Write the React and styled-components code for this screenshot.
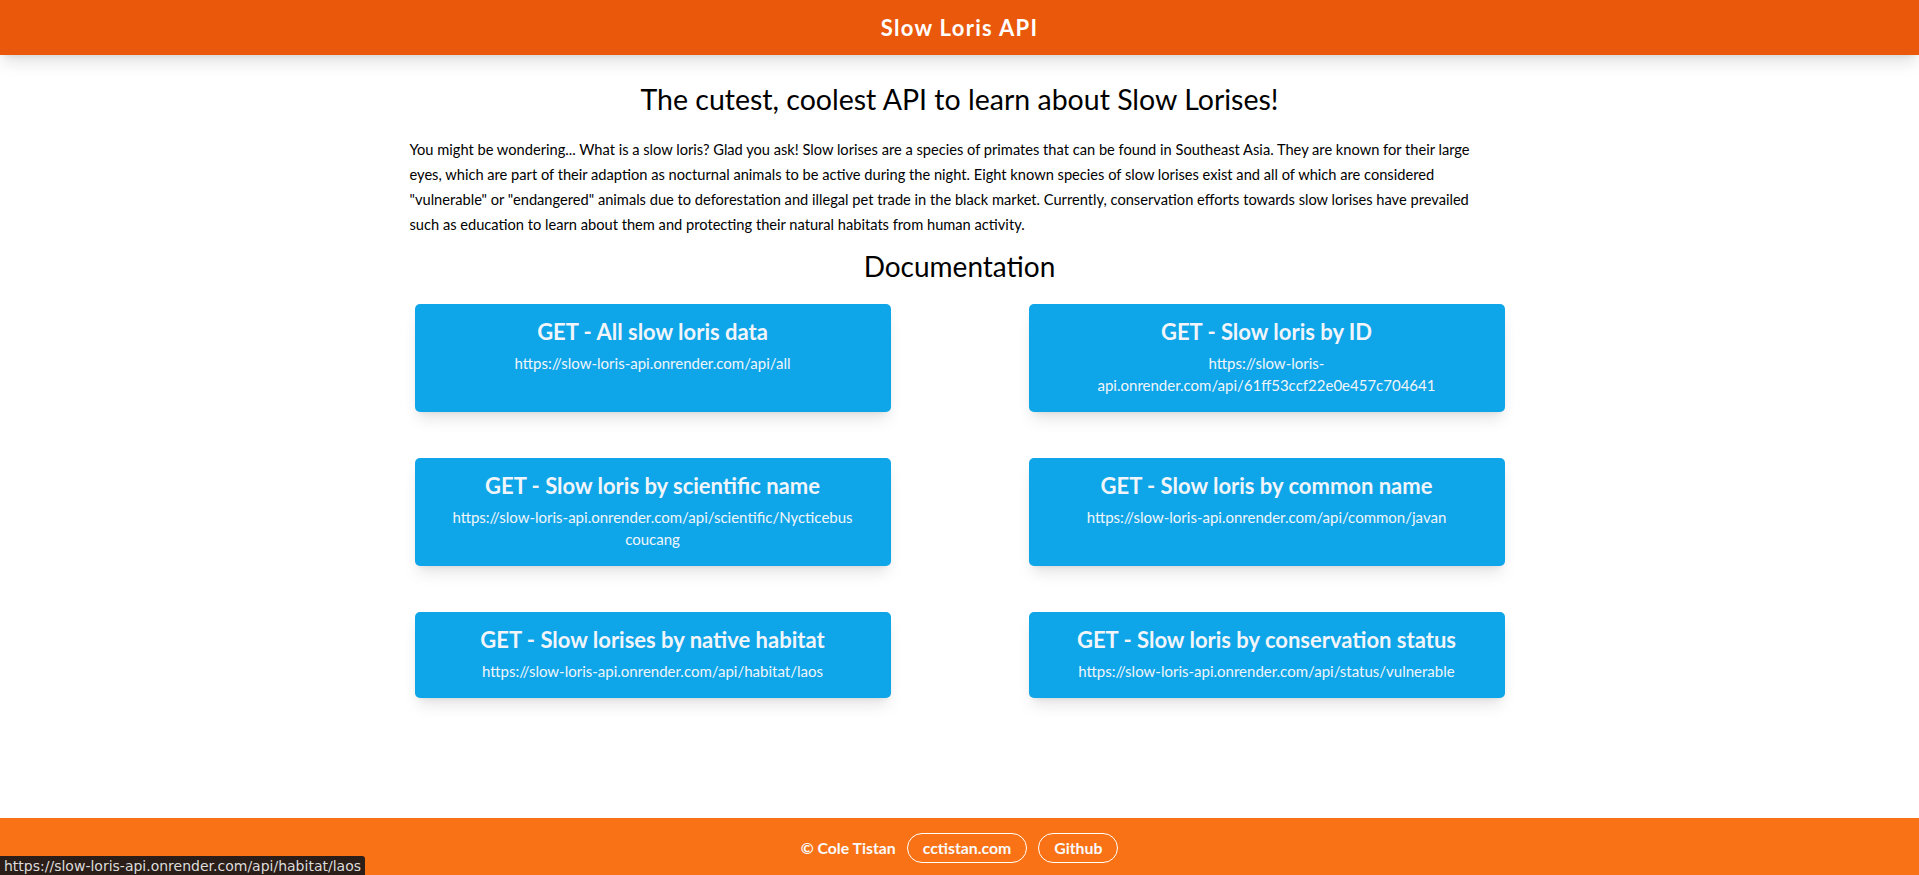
import React from 'react'
import styled, { createGlobalStyle } from 'styled-components'

const GlobalStyle = createGlobalStyle`
    * { box-sizing: border-box; }
    body {
        margin: 0;
        font-family: Lato, "Open Sans", sans-serif;
        color: #000;
        background: #fff;
    }
`

const Page = styled.div`
    min-height: 100vh;
    display: flex;
    flex-direction: column;
`

const Header = styled.header`
    height: 55px;
    background: #ea580c;
    display: flex;
    align-items: center;
    justify-content: center;
    box-shadow: 0 10px 15px -3px rgba(0, 0, 0, 0.12), 0 4px 6px -4px rgba(0, 0, 0, 0.1);
    position: relative;
    z-index: 1;
`

const Brand = styled.h1`
    margin: 0;
    color: #fff;
    font-size: 22px;
    font-weight: 700;
    letter-spacing: 1.3px;
`

const Main = styled.main`
    flex: 1;
    width: 1100px;
    margin: 0 auto;
    padding-top: 26px;
    padding-bottom: 40px;
`

const Title = styled.h2`
    margin: 0;
    text-align: center;
    font-size: ${p => p.size || 28.5}px;
    font-weight: 400;
    line-height: 36px;
`

const Intro = styled.p`
    margin: 20px 0 11px;
    font-size: 14.65px;
    line-height: 25px;
`

const Grid = styled.div`
    margin: 20px auto 0;
    width: 1090px;
    display: grid;
    grid-template-columns: 1fr 1fr;
    column-gap: 138px;
    row-gap: 46px;
`

const Card = styled.a`
    display: block;
    background: #0ea5e9;
    border-radius: 5px;
    padding: 14px 32px 16px;
    text-align: center;
    text-decoration: none;
    color: #f1f5f9;
    box-shadow: 0 10px 15px -3px rgba(0, 0, 0, 0.1), 0 4px 6px -4px rgba(0, 0, 0, 0.1);
`

const CardTitle = styled.h3`
    margin: 0 0 6px;
    font-size: 22px;
    line-height: 28px;
    font-weight: 700;
`

const Url = styled.p`
    margin: 0;
    font-size: 15px;
    line-height: 22px;
`

const Footer = styled.footer`
    height: 57px;
    background: #f97316;
    display: flex;
    align-items: center;
    justify-content: center;
    gap: 11px;
    padding-top: 2px;
    color: #f8fafc;
    font-size: 15.8px;
    font-weight: 700;
`

const Pill = styled.a`
    height: 30px;
    display: inline-flex;
    align-items: center;
    padding: 0 15px;
    border: 1px solid #fff;
    border-radius: 9999px;
    color: #f8fafc;
    text-decoration: none;
`

const StatusBar = styled.div`
    position: fixed;
    left: 0;
    bottom: 0;
    height: 19px;
    padding: 0 4px;
    display: flex;
    align-items: center;
    background: #2b1d17;
    border-top-right-radius: 3px;
    color: #dcdcdc;
    font-family: "DejaVu Sans", sans-serif;
    font-size: 14px;
`

const endpoints = [
    { title: 'GET - All slow loris data', url: 'https://slow-loris-api.onrender.com/api/all' },
    { title: 'GET - Slow loris by ID', url: 'https://slow-loris-api.onrender.com/api/61ff53ccf22e0e457c704641' },
    { title: 'GET - Slow loris by scientific name', url: 'https://slow-loris-api.onrender.com/api/scientific/Nycticebus coucang' },
    { title: 'GET - Slow loris by common name', url: 'https://slow-loris-api.onrender.com/api/common/javan' },
    { title: 'GET - Slow lorises by native habitat', url: 'https://slow-loris-api.onrender.com/api/habitat/laos' },
    { title: 'GET - Slow loris by conservation status', url: 'https://slow-loris-api.onrender.com/api/status/vulnerable' },
]

const App = () => (
    <Page>
        <GlobalStyle />
        <Header>
            <Brand>Slow Loris API</Brand>
        </Header>
        <Main>
            <Title>The cutest, coolest API to learn about Slow Lorises!</Title>
            <Intro>
                You might be wondering... What is a slow loris? Glad you ask! Slow lorises are a species of primates that can be found in Southeast Asia. They are known for their large
                <br />
                eyes, which are part of their adaption as nocturnal animals to be active during the night. Eight known species of slow lorises exist and all of which are considered
                <br />
                "vulnerable" or "endangered" animals due to deforestation and illegal pet trade in the black market. Currently, conservation efforts towards slow lorises have prevailed
                <br />
                such as education to learn about them and protecting their natural habitats from human activity.
            </Intro>
            <Title size={28}>Documentation</Title>
            <Grid>
                {endpoints.map(e => (
                    <Card key={e.title} href={e.url}>
                        <CardTitle>{e.title}</CardTitle>
                        <Url>{e.url}</Url>
                    </Card>
                ))}
            </Grid>
        </Main>
        <Footer>
            <span>© Cole Tistan</span>
            <Pill href="#">cctistan.com</Pill>
            <Pill href="#">Github</Pill>
        </Footer>
        <StatusBar>https://slow-loris-api.onrender.com/api/habitat/laos</StatusBar>
    </Page>
)

export default App
